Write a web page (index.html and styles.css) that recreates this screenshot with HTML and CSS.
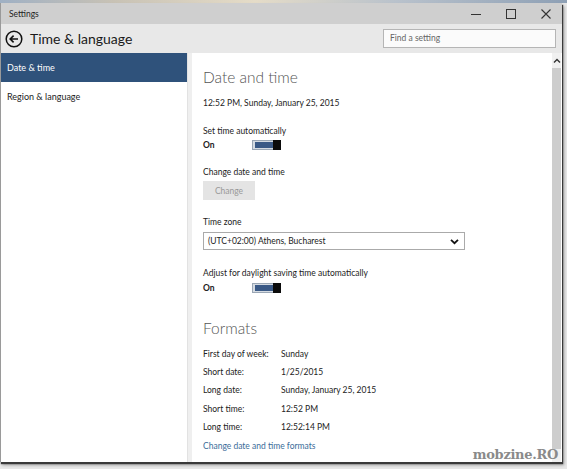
FILE: index.html
```html
<!DOCTYPE html>
<html>
<head>
<meta charset="utf-8">
<link rel="stylesheet" href="styles.css">
</head>
<body>
<div class="desktop">
  <div class="strip"></div>
  <div class="window">
    <div class="titlebar">
      <span class="title">Settings</span>
      <div class="controls">
        <svg width="10" height="10" viewBox="0 0 10 10"><path d="M0 5.5H10" stroke="#333" stroke-width="1"/></svg>
        <svg width="10" height="10" viewBox="0 0 10 10"><rect x="0.5" y="0.5" width="9" height="9" fill="none" stroke="#333" stroke-width="1"/></svg>
        <svg width="10" height="10" viewBox="0 0 10 10"><path d="M0.5 0.5L9.5 9.5M9.5 0.5L0.5 9.5" stroke="#333" stroke-width="1.1"/></svg>
      </div>
    </div>
    <div class="header">
      <svg class="back" width="18" height="18" viewBox="0 0 18 18"><circle cx="9" cy="9" r="7.8" fill="none" stroke="#111" stroke-width="1.5"/><path d="M13 9H5.5M8.6 5.6L5.2 9L8.6 12.4" fill="none" stroke="#111" stroke-width="1.6"/></svg>
      <span class="heading">Time &amp; language</span>
      <div class="search">Find a setting</div>
    </div>
    <div class="main">
      <div class="sidebar">
        <div class="nav selected">Date &amp; time</div>
        <div class="nav">Region &amp; language</div>
      </div>
      <div class="divider"></div>
      <div class="content">
        <div class="pane">
          <h2 class="section">Date and time</h2>
          <div class="now">12:52 PM, Sunday, January 25, 2015</div>

          <div class="label l1">Set time automatically</div>
          <div class="toggle-row t1"><span class="on">On</span><span class="toggle"><span class="fill"></span><span class="thumb"></span></span></div>

          <div class="label l2">Change date and time</div>
          <div class="button">Change</div>

          <div class="label l3">Time zone</div>
          <div class="select"><span>(UTC+02:00) Athens, Bucharest</span>
            <svg width="9" height="7" viewBox="0 0 9 7"><path d="M1 1.8L4.5 5.2L8 1.8" fill="none" stroke="#111" stroke-width="1.8"/></svg>
          </div>

          <div class="label l4">Adjust for daylight saving time automatically</div>
          <div class="toggle-row t2"><span class="on">On</span><span class="toggle"><span class="fill"></span><span class="thumb"></span></span></div>

          <h2 class="section formats">Formats</h2>
          <div class="fmt first"><span class="k">First day of week:</span><span>Sunday</span></div>
          <div class="fmt"><span class="k">Short date:</span><span>1/25/2015</span></div>
          <div class="fmt"><span class="k">Long date:</span><span>Sunday, January 25, 2015</span></div>
          <div class="fmt"><span class="k">Short time:</span><span>12:52 PM</span></div>
          <div class="fmt"><span class="k">Long time:</span><span>12:52:14 PM</span></div>
          <div class="link">Change date and time formats</div>
        </div>
        <div class="scrollbar">
          <div class="arrow up"><svg width="8" height="6" viewBox="0 0 8 6"><path d="M1 4.5L4 1.5L7 4.5" fill="none" stroke="#333" stroke-width="1.4"/></svg></div>
          <div class="track"></div>
          <div class="arrow down"></div>
        </div>
      </div>
    </div>
  </div>
  <div class="watermark">mobzine.RO</div>
</div>
</body>
</html>
```
FILE: styles.css
```css
* { box-sizing: border-box; margin: 0; padding: 0; }
html, body { width: 567px; height: 469px; overflow: hidden; }
body { font-family: Lato, "Open Sans", sans-serif; color: #222; background: #e4e4e4; }
.desktop { position: relative; width: 567px; height: 469px; background: #e8e8e8; }
.strip { height: 3px; background: linear-gradient(90deg, #9fb0c4 0%, #c8c2b5 20%, #e5dcc8 45%, #b9c2cc 70%, #8ea0b5 100%); }
.window { width: 562px; height: 459px; background: #fff; display: flex; flex-direction: column; border-left: 1px solid #9a9a9a; box-shadow: 1px 2px 1px #3a3a3a, 2px 3px 3px rgba(0,0,0,0.35); }
.titlebar { height: 21px; background: #cfcfcf; display: flex; align-items: center; justify-content: space-between; padding-left: 8px; }
.title { font-size: 8.5px; color: #222; }
.controls { display: flex; gap: 25px; padding-right: 11px; align-items: center; }
.controls svg { display: block; }
.header { height: 29px; background: #e8e8e8; display: flex; align-items: center; padding-left: 4px; }
.back { display: block; margin-right: 7px; }
.heading { font-size: 14px; color: #1a1a1a; flex: 1; }
.search { width: 173px; height: 19px; margin-right: 6px; background: #fbfbfb; border: 1px solid #b5b5b5; font-size: 8.5px; color: #666; padding: 3px 0 0 6px; }
.main { flex: 1; display: flex; min-height: 0; }
.sidebar { width: 186px; background: #fff; }
.nav { height: 29px; font-size: 9px; padding-left: 6px; display: flex; align-items: center; color: #222; }
.nav.selected { background: #2f527b; color: #fff; }
.divider { width: 5px; background: #efefef; border-left: 1px solid #e2e2e2; }
.content { flex: 1; display: flex; }
.pane { flex: 1; padding: 13px 0 0 11px; }
.section { font-weight: 300; font-size: 15.5px; color: #555; line-height: 22px; }
.now { font-size: 8.5px; margin-top: 9px; line-height: 12px; }
.label { font-size: 8.5px; line-height: 12px; }
.l1 { margin-top: 16px; }
.l2 { margin-top: 15px; }
.l3 { margin-top: 16px; }
.l4 { margin-top: 17px; }
.toggle-row { display: flex; align-items: center; height: 12px; }
.t1 { margin-top: 2px; }
.t2 { margin-top: 3px; }
.on { font-size: 8.5px; font-weight: 700; width: 49px; }
.toggle { width: 29px; height: 10px; border: 1px solid #9aa6b4; background: #d5dbe2; display: flex; padding: 1px 0 1px 2px; }
.fill { flex: 1; background: #3a5986; }
.thumb { width: 8px; background: #0b0b0b; margin: -2px -1px -2px 0; }
.button { width: 52px; height: 19px; margin-top: 3px; background: #e4e4e4; font-size: 8.5px; color: #999; display: flex; align-items: center; justify-content: center; }
.select { width: 262px; height: 18px; margin-top: 4px; border: 1px solid #aaa; display: flex; align-items: center; justify-content: space-between; padding: 0 5px 0 4px; font-size: 8.5px; }
.select svg { display: block; }
.formats { margin-top: 23px; }
.fmt { display: flex; font-size: 8.5px; line-height: 12px; margin-top: 6.2px; }
.fmt.first { margin-top: 9px; }
.k { width: 78px; }
.link { font-size: 8.5px; color: #3b6c99; margin-top: 7px; line-height: 12px; }
.scrollbar { width: 9px; margin-right: 1px; display: flex; flex-direction: column; background: #f0f0f0; }
.arrow { height: 15px; display: flex; align-items: center; justify-content: center; }
.arrow.down { height: 13px; }
.track { flex: 1; background: #cdcdcd; }
.watermark { position: absolute; right: 9px; top: 447px; font-family: "DejaVu Serif", serif; font-weight: 700; font-size: 13px; color: #8a8a8a; letter-spacing: -0.3px; }
```
